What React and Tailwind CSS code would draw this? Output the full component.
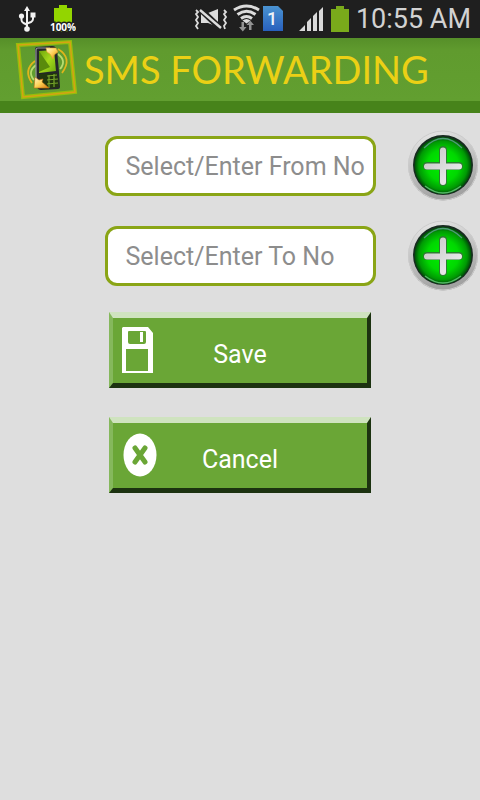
import React from "react";

function StatusBar() {
  return (
    <div className="flex h-[38px] items-center justify-between bg-[#1f1f1f] pl-[18px] pr-[9px]">
      <div className="flex items-center gap-[14px]">
        <svg width="18" height="28" viewBox="0 0 18 28" fill="none" stroke="#f2f2f2" strokeWidth="2" aria-label="USB">
          <path d="M9 4V24M3.500 11v4q0 2 2 3l3 1.500M15 11v3q0 2-2 3l-4 1.500" />
          <path d="M9 1l3 5H6z" fill="#f2f2f2" stroke="none" />
          <circle cx="9" cy="24" r="2.800" fill="#f2f2f2" stroke="none" />
          <circle cx="3.500" cy="11" r="2.600" fill="#f2f2f2" stroke="none" />
          <path d="M12.500 7.500h5v5h-5z" fill="#f2f2f2" stroke="none" />
        </svg>
        <svg width="26" height="30" viewBox="0 0 26 30" aria-label="Battery full">
          <path d="M9 1h8v3h5v24H4V4h5z" fill="#93d500" />
          <text x="13" y="27" textAnchor="middle" fontFamily="'Open Sans', sans-serif" fontWeight="700" fontSize="10" fill="#fff" stroke="#1f1f1f" strokeWidth="3" paintOrder="stroke">100%</text>
        </svg>
      </div>
      <div className="flex items-center">
        <svg width="156" height="38" viewBox="194 0 156 38" aria-label="Muted, Wi-Fi, SIM 1, signal, battery">
          <g fill="#dcdcdc">
            <path d="M201 13h7l10-4v18l-10-4h-7z" />
            <path d="M199 8l22 21" stroke="#1f1f1f" strokeWidth="6" />
            <path d="M200 10l21 18" stroke="#dcdcdc" strokeWidth="2.400" />
            <path d="M196 10l2 2-2 2 2 3-2 3 2 3-2 3 2 3M224 10l2 2-2 2 2 3-2 3 2 3-2 3 1 3" fill="none" stroke="#dcdcdc" strokeWidth="1.800" />
          </g>
          <g fill="none" stroke="#dcdcdc" strokeWidth="3">
            <path d="M234 10q12.500-8 25 0M237.500 14.500q9-6.500 18 0M241 18.500q5.500-4 11 0" />
            <path d="M242.500 20.500q4-3 8 0l-4 3z" fill="#dcdcdc" stroke="none" />
          </g>
          <path d="M241.500 22h2.500v5h2.500l-3.700 4.500-3.800-4.500h2.500zM249 30v-5h-2.500l3.700-4.500 3.800 4.500h-2.500v5z" fill="#929292" />
          <defs>
            <linearGradient id="sim" x2="0" y2="1"><stop stopColor="#4a93d1" /><stop offset="1" stopColor="#2860bd" /></linearGradient>
          </defs>
          <path d="M263 6h15l5 5v20h-20z" fill="url(#sim)" />
          <text x="272" y="25" textAnchor="middle" fontFamily="Roboto, sans-serif" fontWeight="500" fontSize="18" fill="#eef3f8">1</text>
          <path d="M299 31l6-6v6zM307 31v-9l4-4v13zM313 31V16l4-4v19zM319 31V11l4-4v24z" fill="#d9d9d9" />
          <path d="M336 6h8v3h5v23h-18V9h5z" fill="#7aaa1b" />
        </svg>
        <span className="ml-[6px] font-[Roboto,sans-serif] text-[27px] leading-[38px] text-[#d2d2d2]">10:55 AM</span>
      </div>
    </div>
  );
}

function Logo() {
  return (
    <svg className="shrink-0" width="66" height="64" viewBox="14 38 66 64" aria-hidden="true">
      <defs>
        <linearGradient id="arrow" x2="1" y2="1"><stop stopColor="#fff6cc" /><stop offset=".5" stopColor="#ffd257" /><stop offset="1" stopColor="#d9780c" /></linearGradient>
        <linearGradient id="screen" x2="1" y2="1"><stop stopColor="#6da30b" /><stop offset=".5" stopColor="#a5d91c" /><stop offset="1" stopColor="#6da80d" /></linearGradient>
      </defs>
      <path d="M18 45l52-3 5 50-52 5z" fill="none" stroke="#97bd0c" strokeWidth="4" />
      <path d="M18 45l52-3 5 50-52 5z" fill="none" stroke="#d5a313" strokeWidth="1.500" />
      <g fill="none" strokeWidth="1.800">
        <path d="M35 61q-12 9-3 22" stroke="#dfb51b" />
        <path d="M36 65q-9 7-2 15" stroke="#b7dd70" />
        <path d="M58 49q15 9 4 24" stroke="#dfb51b" />
        <path d="M58 54q9 7 2 15" stroke="#b7dd70" />
      </g>
      <path d="M35 49q0-2 2-2l15-1q4 0 5 4l2 22 1 15q0 2-2 2l-17 1q-3 0-4-3z" fill="#25262b" />
      <path d="M36 85V50q0-2 2-2h12" fill="none" stroke="#93949e" strokeWidth="1.200" />
      <path d="M39 51l15-1 2 21-17 2z" fill="url(#screen)" />
      <path d="M39 51l11 16-11 5z" fill="#598b0c" />
      <path d="M39 74l18-1 2 14-17 2z" fill="#22370e" />
      <path d="M47 76l10-1M47 80l11-1M47 84l11-1M49 75v13M54 74v13" stroke="#75a42a" strokeWidth="1.200" />
      <path d="M46 48h10l2 4-4 3-1 4-3-5-3-2z" fill="url(#arrow)" stroke="#e5a42b" strokeWidth=".6" />
      <path d="M34 88l1-11 4 3 4-1-1 3 7 6z" fill="url(#arrow)" stroke="#b86b12" strokeWidth=".6" />
    </svg>
  );
}

function Header() {
  return (
    <header className="flex h-[75px] items-start border-b-[12px] border-[#47831a] bg-linear-to-b from-[#568f29] via-[#609b2e] via-20% to-[#629f30] pl-[14px]">
      <Logo />
      <h1 className="ml-1 whitespace-nowrap font-[Lato,sans-serif] text-[38px] leading-[62px] text-[#ebd015]">SMS FORWARDING</h1>
    </header>
  );
}

function PlusIcon({ id }) {
  return (
    <svg width="72" height="72" viewBox="0 0 72 72" aria-hidden="true">
      <defs>
        <linearGradient id={id + "rim"} x2=".3" y2="1"><stop stopColor="#ececec" /><stop offset=".45" stopColor="#c9c9c9" /><stop offset="1" stopColor="#a2a2a2" /></linearGradient>
        <radialGradient id={id + "face"}><stop stopColor="#00f000" /><stop offset=".55" stopColor="#00d800" /><stop offset=".85" stopColor="#009a04" /><stop offset="1" stopColor="#004a08" /></radialGradient>
        <linearGradient id={id + "plus"} x2="1" y2="1"><stop stopColor="#c4c4c4" /><stop offset="1" stopColor="#f2f2f2" /></linearGradient>
      </defs>
      <circle cx="36" cy="35.500" r="35" fill={"url(#" + id + "rim)"} />
      <circle cx="36" cy="35.500" r="34.500" fill="none" stroke="#cccccc" />
      <circle cx="36" cy="35" r="30" fill="#182b20" />
      <circle cx="36" cy="35.500" r="28.500" fill={"url(#" + id + "face)"} />
      <path d="M17 18q19-19 38 0" fill="none" stroke="#4f9a78" strokeWidth="1.200" />
      <path d="M18 56q18 14 36 0" fill="none" stroke="#55b868" strokeWidth="1.500" />
      <path d="M36 20v32M20 36h32" stroke="#2c7d30" strokeWidth="8" strokeLinecap="round" />
      <path d="M33 20.500a3 3 0 0 1 6 0V33.500H52a3 3 0 0 1 0 6H39V52a3 3 0 0 1-6 0V39.500H20a3 3 0 0 1 0-6H33z" fill={"url(#" + id + "plus)"} />
    </svg>
  );
}

function NumberRow({ id, label }) {
  return (
    <div className="grid grid-cols-[1fr_271px_1fr] items-center">
      <input id={id} type="tel" aria-label={label} placeholder={label} className="col-start-2 h-[60px] w-full rounded-[12px] border-3 border-[#8aa516] bg-white pl-[18px] font-[Roboto,sans-serif] text-[25px] text-black outline-none placeholder:text-[#8d8d8d]" />
      <button type="button" aria-label={"Choose " + label} className="justify-self-end pr-px">
        <PlusIcon id={id} />
      </button>
    </div>
  );
}

function ActionButton({ icon, children }) {
  return (
    <button type="button" className="relative h-[76px] w-[262px] border-4 border-t-6 border-b-5 border-t-[#cfe3bf] border-r-[#1c3210] border-b-[#1c3210] border-l-[#85b85c] bg-[#6aa636] pt-2 text-center font-[Roboto,sans-serif] text-[25px] text-white">
      <span className="absolute left-[7px] top-[7px]">{icon}</span>
      {children}
    </button>
  );
}

const saveIcon = (
  <svg width="34" height="50" viewBox="0 0 34 50" aria-hidden="true">
    <path fillRule="evenodd" fill="#fff" d="M3 2h25l5 6v40H2V3zM8 7v10q0 2 2 2h14q2 0 2-2V7q0-1-1-1H9q-1 0-1 1zM6 24v22h22V24z" />
    <path d="M20 7h3v10h-3z" fill="#fff" />
  </svg>
);

const cancelIcon = (
  <svg width="38" height="50" viewBox="0 0 38 50" aria-hidden="true">
    <ellipse cx="20" cy="25" rx="16.500" ry="21.500" fill="#fff" />
    <path d="M15 18l10 14M25 18L15 32" stroke="#6aa636" strokeWidth="5" strokeLinecap="round" />
  </svg>
);

export default function App() {
  return (
    <div className="min-h-screen bg-[#dedede]">
      <StatusBar />
      <Header />
      <main>
        <form className="flex flex-col gap-[18px] pt-[17px]">
          <NumberRow id="from" label="Select/Enter From No" />
          <NumberRow id="to" label="Select/Enter To No" />
          <div className="mt-[2px] flex flex-col items-center gap-[29px]">
            <ActionButton icon={saveIcon}>Save</ActionButton>
            <ActionButton icon={cancelIcon}>Cancel</ActionButton>
          </div>
        </form>
      </main>
    </div>
  );
}
